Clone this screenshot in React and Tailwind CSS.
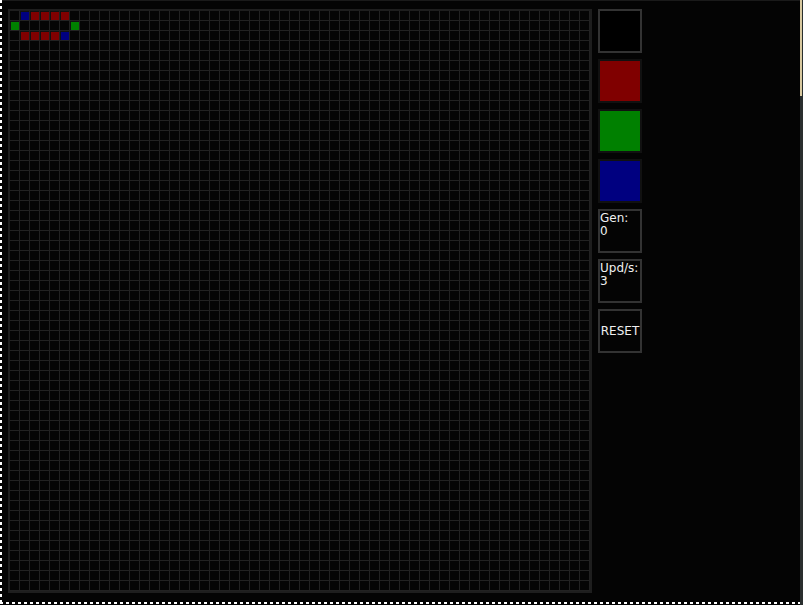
import { useState } from 'react'

const COLS = 58
const ROWS = 58

// starting pattern keyed by row-col
const SEED = {
  '0-1': 'bg-[#000080]',
  '0-2': 'bg-[#800000]',
  '0-3': 'bg-[#800000]',
  '0-4': 'bg-[#800000]',
  '0-5': 'bg-[#800000]',
  '1-0': 'bg-[#008000]',
  '1-6': 'bg-[#008000]',
  '2-1': 'bg-[#800000]',
  '2-2': 'bg-[#800000]',
  '2-3': 'bg-[#800000]',
  '2-4': 'bg-[#800000]',
  '2-5': 'bg-[#000080]',
}

const PALETTE = [
  { id: 'black', cls: 'bg-black' },
  { id: 'red', cls: 'bg-[#800000]' },
  { id: 'green', cls: 'bg-[#008000]' },
  { id: 'blue', cls: 'bg-[#000080]' },
]

function Board() {
  const cells = []
  for (let r = 0; r < ROWS; r++) {
    for (let c = 0; c < COLS; c++) {
      const key = `${r}-${c}`
      const fill = SEED[key]
      cells.push(
        <div key={key} className="border-r border-b border-[#222]">
          {fill
            ? <div className={`w-[9px] h-[9px] border-l border-t border-[#111] ${fill}`} />
            : <div className="w-[9px] h-[9px] bg-[#050505]" />}
        </div>
      )
    }
  }
  return (
    <div className="border-2 border-[#1e1e1e] w-[584px] h-[584px] shrink-0">
      <div className="grid grid-cols-[repeat(58,10px)] grid-rows-[repeat(58,10px)] bg-black">
        {cells}
      </div>
    </div>
  )
}

export default function App() {
  const [selected, setSelected] = useState('black')
  const [gen, setGen] = useState(0)

  return (
    <div className="relative w-[803px] h-[605px] bg-[#040404] overflow-hidden font-['DejaVu_Sans',sans-serif]">
      {/* frame artefacts */}
      <div className="absolute top-0 left-0 w-[800px] h-px bg-[#1a1a1a]" />
      <div className="absolute top-0 left-0 w-[2px] h-[603px] bg-[repeating-linear-gradient(to_bottom,#ffffff_0px,#ffffff_3px,transparent_3px,transparent_6px)]" />
      <div className="absolute left-0 top-[602px] w-[800px] h-[2px] bg-[repeating-linear-gradient(to_right,#ffffff_0px,#ffffff_3px,transparent_3px,transparent_6px)]" />
      <div className="absolute top-0 left-[800px] w-[3px] h-[605px] bg-[#2a2f2f]" />
      <div className="absolute top-0 left-[800px] w-[2px] h-[96px] bg-[#d8c9a0]" />

      <div className="flex items-start gap-[6px] pl-[8px] pt-[9px]">
        <Board />

        <div className="flex flex-col gap-[6px] text-[12px] leading-[13px] text-[#f0f0f0]">
          {PALETTE.map(p => (
            <button
              key={p.id}
              onClick={() => setSelected(p.id)}
              className={`w-[44px] h-[44px] border-2 ${selected === p.id ? 'border-[#333]' : 'border-[#111]'} ${p.cls}`}
            />
          ))}
          <div className="w-[44px] h-[44px] border-2 border-[#333] pt-px">
            Gen:<br />{gen}
          </div>
          <div className="w-[44px] h-[44px] border-2 border-[#333] pt-px">
            Upd/s:<br />3
          </div>
          <button
            onClick={() => setGen(0)}
            className="w-[44px] h-[44px] border-2 border-[#333] flex items-center justify-center"
          >
            RESET
          </button>
        </div>
      </div>
    </div>
  )
}
